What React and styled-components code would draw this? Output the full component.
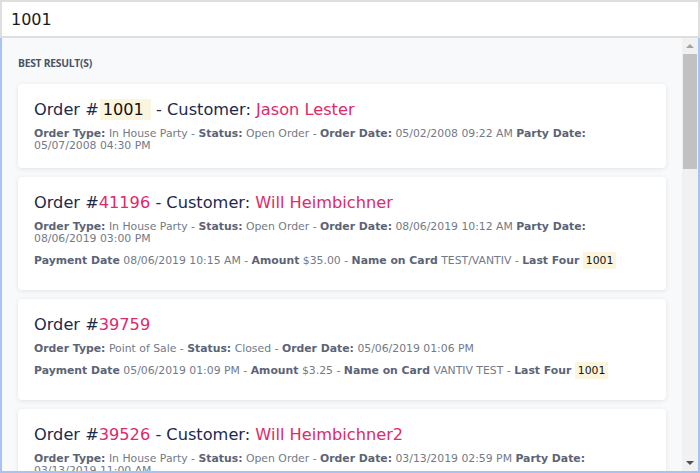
import React from "react";
import styled, { createGlobalStyle } from "styled-components";

const Global = createGlobalStyle`
  html, body { margin: 0; padding: 0; background: #fff; }
  body { font-family: "DejaVu Sans", Verdana, sans-serif; }
  * { box-sizing: border-box; }
`;

const Frame = styled.div`
  width: 700px;
  height: 473px;
  display: flex;
  flex-direction: column;
`;

const SearchInput = styled.div`
  height: 38px;
  flex: none;
  border: 2px solid #dedede;
  background: #fff;
  padding: 0 9px;
  display: flex;
  align-items: center;
  font-size: 16px;
  color: #1b1b1b;
`;

const Panel = styled.div`
  flex: 1;
  min-height: 0;
  display: flex;
  border: 2px solid #a6c3f3;
  border-top: none;
  background: #f8f9fa;
`;

const Scroller = styled.div`
  flex: 1;
  overflow: hidden;
  padding: 0 16px;
`;

const SectionLabel = styled.div`
  font-family: "Open Sans", sans-serif;
  font-weight: 700;
  font-size: 10.3px;
  color: #4a5466;
  letter-spacing: -0.25px;
  padding: 19px 0 15px;
  line-height: 12px;
`;

const CardList = styled.div`
  display: flex;
  flex-direction: column;
  gap: 9px;
`;

const Card = styled.div`
  background: #fff;
  border-radius: 4px;
  box-shadow: 0 1px 4px rgba(30, 40, 60, 0.1);
  padding: 14px 16px ${(p) => (p.$extra ? "21px" : "16px")};
`;

const Title = styled.div`
  font-size: 16.2px;
  line-height: 24px;
  color: #1d2a4a;
  white-space: nowrap;
`;

const Accent = styled.span`
  color: #e0286a;
`;

const Mark = styled.span`
  background: #fcf5de;
  color: #111;
  padding: ${(p) => (p.$big ? "1px 7px 1px 3px" : "2px 3px")};
  margin-left: ${(p) => (p.$big ? "1px" : "0")};
`;

const Meta = styled.div`
  margin-top: 6px;
  font-size: 10.85px;
  line-height: 12px;
  color: #737a87;
`;

const PayRow = styled.div`
  margin-top: 8px;
  font-size: 10.85px;
  line-height: 16px;
  color: #737a87;
`;

const Label = styled.b`
  color: #5b6477;
  font-weight: 700;
`;

const ScrollBar = styled.div`
  width: 16px;
  flex: none;
  background: #f1f1f1;
  display: flex;
  flex-direction: column;
  align-items: center;
`;

const Arrow = styled.div`
  height: 16px;
  width: 100%;
  display: flex;
  align-items: center;
  justify-content: center;
  &::before {
    content: "";
    border-left: 4px solid transparent;
    border-right: 4px solid transparent;
    ${(p) =>
      p.$down
        ? "border-top: 4px solid #505050;"
        : "border-bottom: 4px solid #a3a3a3;"}
  }
`;

const Track = styled.div`
  flex: 1;
  width: 100%;
  padding: 0 1px;
`;

const Thumb = styled.div`
  height: 115px;
  background: #c1c1c1;
`;

const orders = [
  {
    id: "1001",
    hl: true,
    customer: "Jason Lester",
    type: "In House Party",
    status: "Open Order",
    date: "05/02/2008 09:22 AM",
    party: "05/07/2008 04:30 PM",
  },
  {
    id: "41196",
    customer: "Will Heimbichner",
    type: "In House Party",
    status: "Open Order",
    date: "08/06/2019 10:12 AM",
    party: "08/06/2019 03:00 PM",
    pay: { date: "08/06/2019 10:15 AM", amount: "$35.00", name: "TEST/VANTIV" },
  },
  {
    id: "39759",
    type: "Point of Sale",
    status: "Closed",
    date: "05/06/2019 01:06 PM",
    pay: { date: "05/06/2019 01:09 PM", amount: "$3.25", name: "VANTIV TEST" },
  },
  {
    id: "39526",
    customer: "Will Heimbichner2",
    type: "In House Party",
    status: "Open Order",
    date: "03/13/2019 02:59 PM",
    party: "03/13/2019 11:00 AM",
  },
];

function OrderCard({ o }) {
  return (
    <Card $extra={!!o.pay}>
      <Title>
        Order #{o.hl ? <Mark $big>1001</Mark> : <Accent>{o.id}</Accent>}
        {o.customer && (
          <>
            {" "}- Customer: <Accent>{o.customer}</Accent>
          </>
        )}
      </Title>
      <Meta>
        <Label>Order Type:</Label> {o.type} - <Label>Status:</Label> {o.status} -{" "}
        <Label>Order Date:</Label> {o.date}
        {o.party && (
          <>
            {" "}
            <Label>Party Date:</Label> {o.party}
          </>
        )}
      </Meta>
      {o.pay && (
        <PayRow>
          <Label>Payment Date</Label> {o.pay.date} - <Label>Amount</Label> {o.pay.amount} -{" "}
          <Label>Name on Card</Label> {o.pay.name} - <Label>Last Four</Label>{" "}
          <Mark>1001</Mark>
        </PayRow>
      )}
    </Card>
  );
}

export default function App() {
  return (
    <Frame>
      <Global />
      <SearchInput>1001</SearchInput>
      <Panel>
        <Scroller>
          <SectionLabel>BEST RESULT(S)</SectionLabel>
          <CardList>
            {orders.map((o) => (
              <OrderCard key={o.id} o={o} />
            ))}
          </CardList>
        </Scroller>
        <ScrollBar>
          <Arrow />
          <Track>
            <Thumb />
          </Track>
          <Arrow $down />
        </ScrollBar>
      </Panel>
    </Frame>
  );
}
